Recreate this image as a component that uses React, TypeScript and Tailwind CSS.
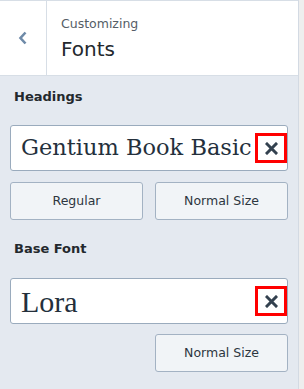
import React from 'react';

const ui = { fontFamily: '"DejaVu Sans", "Noto Sans", sans-serif' };

const ClearButton: React.FC = () => (
  <div className="w-[32px] h-[30px] border-[3px] border-[#ff0000] flex items-center justify-center shrink-0">
    <svg width="13" height="13" viewBox="0 0 13 13">
      <path d="M2 2 L11 11 M11 2 L2 11" stroke="#33414f" strokeWidth="3" strokeLinecap="square" />
    </svg>
  </div>
);

const FontField: React.FC<{ name: string; className: string; family: string }> = ({ name, className, family }) => (
  <div className="h-[46px] bg-white border border-[#9aabbd] rounded-[3px] flex items-center justify-between pl-[10px]">
    <span className={`text-[#24303c] whitespace-nowrap overflow-hidden ${className}`} style={{ fontFamily: family }}>
      {name}
    </span>
    <ClearButton />
  </div>
);

const OptionButton: React.FC<{ label: string }> = ({ label }) => (
  <button className="h-[38px] w-[133px] bg-[#f1f4f7] border border-[#a3b2c3] rounded-[3px] text-[12.5px] text-[#2c3640]">
    {label}
  </button>
);

const App: React.FC = () => {
  return (
    <div className="w-[304px] h-[389px] flex bg-[#eeeeee]" style={ui}>
      <div className="w-[299px] h-full bg-[#e4e9f0] border-r border-[#d3dae3] flex flex-col">
        {/* header */}
        <div className="h-[76px] bg-white border-t border-b border-[#d7dee6] flex">
          <div className="w-[47px] border-r border-[#d7dee6] flex items-center justify-center">
            <svg width="10" height="14" viewBox="0 0 10 14">
              <path d="M7.5 1.5 L2.5 7 L7.5 12.5" fill="none" stroke="#6e8aa8" strokeWidth="2.6" />
            </svg>
          </div>
          <div className="pl-[14px] pt-[14px]">
            <div className="text-[12.5px] text-[#555d66] leading-[18px]">Customizing</div>
            <div className="text-[20px] text-[#23282d] leading-[26px] mt-[3px]">Fonts</div>
          </div>
        </div>

        <div className="px-[10px]">
          <div className="pt-[12px] pl-[4px] text-[13px] font-bold text-[#23282d] leading-[18px]">Headings</div>
          <div className="mt-[19px]">
            <FontField
              name="Gentium Book Basic"
              className="text-[22.5px]"
              family='"DejaVu Serif", "Liberation Serif", serif'
            />
          </div>
          <div className="mt-[11px] flex justify-between">
            <OptionButton label="Regular" />
            <OptionButton label="Normal Size" />
          </div>

          <div className="pt-[20px] pl-[4px] text-[13px] font-bold text-[#23282d] leading-[18px]">Base Font</div>
          <div className="mt-[20px]">
            <FontField name="Lora" className="text-[30px]" family='"Liberation Serif", "DejaVu Serif", serif' />
          </div>
          <div className="mt-[10px] flex justify-end">
            <OptionButton label="Normal Size" />
          </div>
        </div>
      </div>
    </div>
  );
};

export default App;
